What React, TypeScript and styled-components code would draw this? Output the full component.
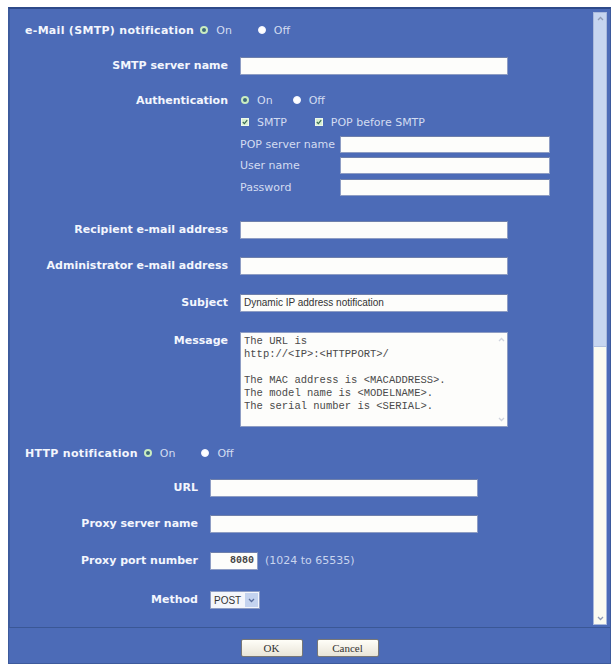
import styled, {createGlobalStyle} from 'styled-components';

const GlobalStyle = createGlobalStyle`
  html, body {
    margin: 0;
    padding: 0;
    background: #ffffff;
  }
`;

const Frame = styled.div`
  box-sizing: border-box;
  margin: 7px 0 0 8px;
  width: 603px;
  height: 657px;
  background: #4c6bb7;
  border: 1px solid #3d5a9c;
  border-top: 2px solid #2e4a8a;
  display: flex;
  flex-direction: column;
  font-family: 'DejaVu Sans', Verdana, sans-serif;
`;

const Main = styled.div`
  display: flex;
  height: 618px;
  border-left: 1px solid #3f5d9f;
  border-bottom: 1px solid #3a5796;
`;

const Content = styled.div`
  flex: 1;
  padding-left: 15px;
  display: flex;
  flex-direction: column;
`;

const Row = styled.div<{$top: number; $h?: number}>`
  display: flex;
  align-items: flex-start;
  margin-top: ${(p) => p.$top}px;
  min-height: ${(p) => p.$h ?? 18}px;
`;

const Label = styled.div<{$w: number}>`
  width: ${(p) => p.$w}px;
  margin-right: 12px;
  text-align: right;
  font-weight: bold;
  font-size: 11px;
  line-height: 18px;
  color: #f3f6fd;
  white-space: nowrap;
`;

const Heading = styled.div`
  display: flex;
  align-items: center;
  height: 16px;
  font-weight: bold;
  font-size: 11px;
  letter-spacing: 0.3px;
  color: #f3f6fd;
  white-space: nowrap;
`;

const Field = styled.div`
  display: flex;
  flex-direction: column;
`;

const Inline = styled.div<{$gap: number; $ml?: number}>`
  display: flex;
  align-items: center;
  height: 16px;
  gap: ${(p) => p.$gap}px;
  margin-left: ${(p) => p.$ml ?? 0}px;
`;

const Option = styled.label`
  display: flex;
  align-items: center;
  gap: 8px;
  font-size: 11px;
  font-weight: normal;
  color: #d3dcf1;
  white-space: nowrap;
`;

const Radio = styled.span<{$on?: boolean}>`
  box-sizing: border-box;
  width: 8px;
  height: 8px;
  border-radius: 50%;
  background: ${(p) => (p.$on ? '#3d6a7c' : '#ffffff')};
  border: ${(p) => (p.$on ? '2px solid #c9ecc0' : '1px solid #f4f6ff')};
`;

const Check = styled.span`
  box-sizing: border-box;
  width: 8px;
  height: 8px;
  background: #d6efd0;
  border: 1px solid #eef9ea;
  display: flex;
  align-items: center;
  justify-content: center;

  svg {
    width: 6px;
    height: 6px;
  }
`;

const Input = styled.div<{$w: number; $h?: number}>`
  box-sizing: border-box;
  width: ${(p) => p.$w}px;
  height: ${(p) => p.$h ?? 18}px;
  background: #fdfdfb;
  border: 1px solid #8e9dc4;
  border-top-color: #6f80ab;
  font-family: 'Liberation Sans', Arial, sans-serif;
  font-size: 10px;
  color: #333333;
  line-height: 16px;
  padding: 0 3px;
  white-space: nowrap;
  overflow: hidden;
`;

const PortInput = styled(Input)`
  text-align: right;
  font-family: 'Liberation Mono', monospace;
  font-weight: bold;
  color: #444444;
`;

const SubRow = styled.div<{$top: number}>`
  display: flex;
  align-items: center;
  margin-top: ${(p) => p.$top}px;
`;

const SubLabel = styled.div`
  width: 100px;
  font-size: 11px;
  color: #d3dcf1;
  white-space: nowrap;
`;

const Hint = styled.span`
  margin-left: 7px;
  font-size: 11px;
  color: #c9d4ee;
  line-height: 18px;
`;

const MessageBox = styled.div`
  box-sizing: border-box;
  width: 268px;
  height: 95px;
  background: #fdfdfb;
  border: 1px solid #8e9dc4;
  display: flex;
`;

const MessageText = styled.pre`
  flex: 1;
  margin: 0;
  padding: 2px 3px;
  font-family: 'Liberation Mono', monospace;
  font-size: 10.5px;
  line-height: 13px;
  color: #4a4a4a;
`;

const MiniTrack = styled.div`
  width: 12px;
  display: flex;
  flex-direction: column;
  justify-content: space-between;
  align-items: center;
  padding: 4px 0;
`;

const Select = styled.div`
  box-sizing: border-box;
  width: 50px;
  height: 18px;
  background: #f4f6fb;
  border: 1px solid #8e9dc4;
  display: flex;
  align-items: center;
  font-family: 'Liberation Sans', Arial, sans-serif;
  font-size: 10px;
  color: #333333;
  padding-left: 3px;
`;

const SelectArrow = styled.span`
  margin-left: auto;
  width: 13px;
  height: 14px;
  margin-right: 1px;
  background: #c4d3ef;
  display: flex;
  align-items: center;
  justify-content: center;
`;

const ScrollBar = styled.div`
  box-sizing: border-box;
  width: 14px;
  margin: 3px 3px 2px 0;
  border: 1px solid #a9b9dc;
  background: #fbfbf1;
  display: flex;
  flex-direction: column;
`;

const ScrollThumb = styled.div`
  height: 330px;
  background: #c6d5f0;
  border-bottom: 1px solid #b0c0e0;
  display: flex;
  justify-content: center;
  padding-top: 3px;
`;

const ScrollEnd = styled.div`
  margin-top: auto;
  display: flex;
  justify-content: center;
  padding-bottom: 3px;
`;

const Footer = styled.div`
  flex: 1;
  display: flex;
  justify-content: center;
  align-items: flex-start;
  gap: 14px;
  padding-top: 11px;
`;

const Button = styled.button`
  box-sizing: border-box;
  width: 62px;
  height: 18px;
  padding: 0;
  background: linear-gradient(#fffef8, #e9e5d8);
  border: 1px solid #777777;
  border-radius: 2px;
  font-family: 'Liberation Serif', 'Times New Roman', serif;
  font-size: 11px;
  color: #333333;
`;

function Chevron({up, color = '#8f9bb5'}: {up?: boolean; color?: string}) {
  return (
    <svg width="7" height="5" viewBox="0 0 7 5">
      <path
        d={up ? 'M1 4 L3.5 1.5 L6 4' : 'M1 1 L3.5 3.5 L6 1'}
        stroke={color}
        strokeWidth="1.3"
        fill="none"
      />
    </svg>
  );
}

function Tick() {
  return (
    <svg viewBox="0 0 6 6">
      <path d="M0.8 3 L2.4 4.6 L5.2 1.2" stroke="#3b6a55" strokeWidth="1.2" fill="none" />
    </svg>
  );
}

const message = `The URL is
http://<IP>:<HTTPPORT>/

The MAC address is <MACADDRESS>.
The model name is <MODELNAME>.
The serial number is <SERIAL>.`;

export default function App() {
  return (
    <>
      <GlobalStyle />
      <Frame>
        <Main>
          <Content>
            <Row $top={13} $h={16}>
              <Heading>e-Mail (SMTP) notification</Heading>
              <Inline $gap={26} $ml={6}>
                <Option><Radio $on />On</Option>
                <Option><Radio />Off</Option>
              </Inline>
            </Row>

            <Row $top={19}>
              <Label $w={203}>SMTP server name</Label>
              <Input $w={268} />
            </Row>

            <Row $top={17}>
              <Label $w={203}>Authentication</Label>
              <Field>
                <Inline $gap={20} $ml={1}>
                  <Option><Radio $on />On</Option>
                  <Option><Radio />Off</Option>
                </Inline>
                <SubRow $top={6}>
                  <Inline $gap={28} $ml={1}>
                    <Option><Check><Tick /></Check>SMTP</Option>
                    <Option><Check><Tick /></Check>POP before SMTP</Option>
                  </Inline>
                </SubRow>
                <SubRow $top={6}>
                  <SubLabel>POP server name</SubLabel>
                  <Input $w={210} $h={17} />
                </SubRow>
                <SubRow $top={4}>
                  <SubLabel>User name</SubLabel>
                  <Input $w={210} $h={17} />
                </SubRow>
                <SubRow $top={5}>
                  <SubLabel>Password</SubLabel>
                  <Input $w={210} $h={17} />
                </SubRow>
              </Field>
            </Row>

            <Row $top={25}>
              <Label $w={203}>Recipient e-mail address</Label>
              <Input $w={268} />
            </Row>

            <Row $top={18}>
              <Label $w={203}>Administrator e-mail address</Label>
              <Input $w={268} />
            </Row>

            <Row $top={19}>
              <Label $w={203}>Subject</Label>
              <Input $w={268}>Dynamic IP address notification</Input>
            </Row>

            <Row $top={20}>
              <Label $w={203}>Message</Label>
              <MessageBox>
                <MessageText>{message}</MessageText>
                <MiniTrack>
                  <Chevron up color="#d0d4de" />
                  <Chevron color="#d0d4de" />
                </MiniTrack>
              </MessageBox>
            </Row>

            <Row $top={18} $h={16}>
              <Heading>HTTP notification</Heading>
              <Inline $gap={26} $ml={6}>
                <Option><Radio $on />On</Option>
                <Option><Radio />Off</Option>
              </Inline>
            </Row>

            <Row $top={18}>
              <Label $w={173}>URL</Label>
              <Input $w={268} />
            </Row>

            <Row $top={18}>
              <Label $w={173}>Proxy server name</Label>
              <Input $w={268} />
            </Row>

            <Row $top={19}>
              <Label $w={173}>Proxy port number</Label>
              <PortInput $w={48}>8080</PortInput>
              <Hint>(1024 to 65535)</Hint>
            </Row>

            <Row $top={21}>
              <Label $w={173}>Method</Label>
              <Select>
                POST
                <SelectArrow>
                  <Chevron color="#5a6f9e" />
                </SelectArrow>
              </Select>
            </Row>
          </Content>

          <ScrollBar>
            <ScrollThumb>
              <Chevron up />
            </ScrollThumb>
            <ScrollEnd>
              <Chevron />
            </ScrollEnd>
          </ScrollBar>
        </Main>

        <Footer>
          <Button>OK</Button>
          <Button>Cancel</Button>
        </Footer>
      </Frame>
    </>
  );
}
